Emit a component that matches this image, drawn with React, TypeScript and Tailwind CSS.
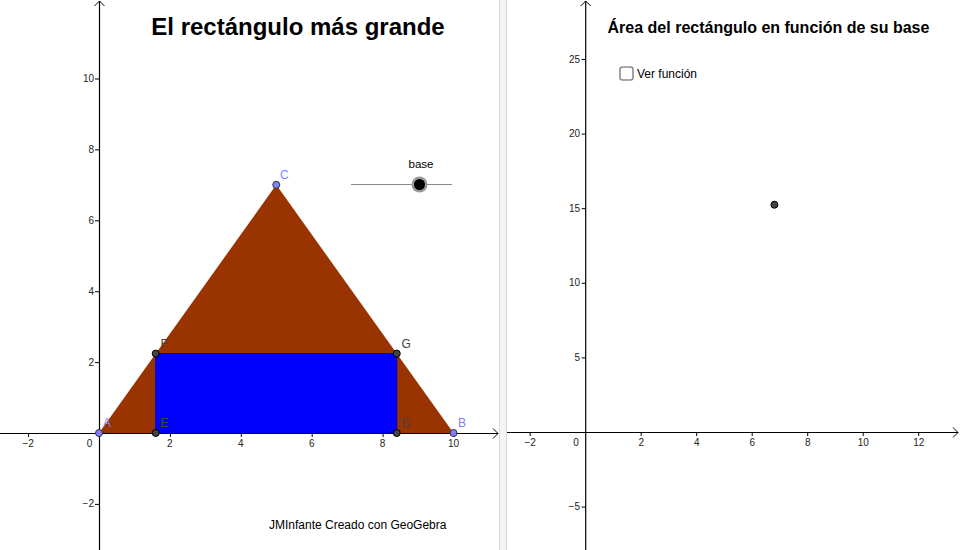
const FONT = '"Liberation Sans", Arial, sans-serif'

type Pt = { x: number; y: number }

function Point({ p, fill, stroke = '#000' }: { p: Pt; fill: string; stroke?: string }) {
  return <circle cx={p.x} cy={p.y} r={3.5} fill={fill} stroke={stroke} strokeWidth={1} />
}

function LeftView() {
  const ox = 99
  const oy = 433
  const s = 35.45
  const fx = (v: number) => ox + v * s
  const fy = (v: number) => oy - v * s

  const A = { x: fx(0), y: fy(0) }
  const B = { x: fx(10), y: fy(0) }
  const C = { x: fx(5), y: fy(7) }
  const E = { x: fx(1.6), y: fy(0) }
  const D = { x: fx(8.4), y: fy(0) }
  const F = { x: fx(1.6), y: fy(2.24) }
  const G = { x: fx(8.4), y: fy(2.24) }

  const xs = [-2, 2, 4, 6, 8, 10]
  const ys = [-2, 2, 4, 6, 8, 10]

  return (
    <svg width={499} height={550} className="block shrink-0" style={{ fontFamily: FONT }}>
      <rect width={499} height={550} fill="#fff" />

      {/* axes */}
      <line x1={0} y1={oy + 0.5} x2={498} y2={oy + 0.5} stroke="#000" strokeWidth={1.2} />
      <polyline points={`493,${oy - 4.5} 498,${oy + 0.5} 493,${oy + 5.5}`} fill="none" stroke="#000" strokeWidth={1} />
      <line x1={ox + 0.5} y1={550} x2={ox + 0.5} y2={1} stroke="#000" strokeWidth={1.2} />
      <polyline points={`${ox - 4.5},6 ${ox + 0.5},1 ${ox + 5.5},6`} fill="none" stroke="#000" strokeWidth={1} />

      {xs.map((v) => (
        <g key={'x' + v}>
          <line x1={fx(v) + 0.5} y1={oy} x2={fx(v) + 0.5} y2={oy + 4} stroke="#000" />
          <text x={fx(v)} y={447} fontSize={10} textAnchor="middle" fill="#222">
            {v < 0 ? '\u2212' + -v : v}
          </text>
        </g>
      ))}
      <text x={89.5} y={447} fontSize={10} textAnchor="middle" fill="#222">0</text>
      {ys.map((v) => (
        <g key={'y' + v}>
          <line x1={ox - 4} y1={fy(v) + 0.5} x2={ox} y2={fy(v) + 0.5} stroke="#000" />
          <text x={94} y={fy(v) + 3.5} fontSize={10} textAnchor="end" fill="#222">
            {v < 0 ? '\u2212' + -v : v}
          </text>
        </g>
      ))}

      {/* triangle and rectangle */}
      <polygon points={`${A.x},${A.y} ${B.x},${B.y} ${C.x},${C.y}`} fill="#993300" />
      <polygon
        points={`${E.x},${E.y} ${D.x},${D.y} ${G.x},${G.y} ${F.x},${F.y}`}
        fill="#0000ff"
        stroke="#0000cc"
        strokeWidth={1}
      />

      {/* points */}
      <Point p={A} fill="#7f7fff" stroke="#333" />
      <Point p={B} fill="#7f7fff" stroke="#333" />
      <Point p={C} fill="#7f7fff" stroke="#333" />
      <Point p={E} fill="#444" />
      <Point p={D} fill="#444" />
      <Point p={F} fill="#444" />
      <Point p={G} fill="#444" />

      <g fontSize={12}>
        <text x={103} y={427} fill="#7f7fff">A</text>
        <text x={458} y={427} fill="#7f7fff">B</text>
        <text x={280} y={179} fill="#7f7fff">C</text>
        <text x={160.5} y={427} fill="#444">E</text>
        <text x={401.5} y={427} fill="#444">D</text>
        <text x={160.5} y={348} fill="#444">F</text>
        <text x={401.5} y={348} fill="#444">G</text>
      </g>

      {/* slider */}
      <text x={421} y={168} fontSize={11.5} textAnchor="middle" fill="#000">base</text>
      <line x1={351} y1={184.5} x2={452} y2={184.5} stroke="#8a8a8a" strokeWidth={1} />
      <circle cx={419.5} cy={184.5} r={8} fill="#9a9a9a" />
      <circle cx={419.5} cy={184.5} r={5.5} fill="#000" />

      {/* texts */}
      <text x={298} y={35} fontSize={24} fontWeight="bold" textAnchor="middle" fill="#000">
        El rectángulo más grande
      </text>
      <text x={269} y={529} fontSize={12} fill="#000">
        JMInfante Creado con GeoGebra
      </text>
    </svg>
  )
}

function RightView() {
  const ox = 78.7
  const oy = 432
  const sx = 27.75
  const sy = 14.92
  const fx = (v: number) => ox + v * sx
  const fy = (v: number) => oy - v * sy

  const xs = [-2, 2, 4, 6, 8, 10, 12]
  const ys = [-5, 5, 10, 15, 20, 25]

  return (
    <svg width={453} height={550} className="block shrink-0" style={{ fontFamily: FONT }}>
      <rect width={453} height={550} fill="#fff" />

      <line x1={0} y1={oy + 0.5} x2={451} y2={oy + 0.5} stroke="#000" strokeWidth={1.2} />
      <polyline points={`446,${oy - 4.5} 451,${oy + 0.5} 446,${oy + 5.5}`} fill="none" stroke="#000" strokeWidth={1} />
      <line x1={ox} y1={550} x2={ox} y2={1} stroke="#000" strokeWidth={1.2} />
      <polyline points={`${ox - 5},6 ${ox},1 ${ox + 5},6`} fill="none" stroke="#000" strokeWidth={1} />

      {xs.map((v) => (
        <g key={'x' + v}>
          <line x1={fx(v)} y1={oy} x2={fx(v)} y2={oy + 4} stroke="#000" />
          <text x={fx(v)} y={446} fontSize={10} textAnchor="middle" fill="#222">
            {v < 0 ? '\u2212' + -v : v}
          </text>
        </g>
      ))}
      <text x={69} y={446} fontSize={10} textAnchor="middle" fill="#222">0</text>
      {ys.map((v) => (
        <g key={'y' + v}>
          <line x1={ox - 4} y1={fy(v) + 0.5} x2={ox} y2={fy(v) + 0.5} stroke="#000" />
          <text x={73} y={fy(v) + 3.5} fontSize={10} textAnchor="end" fill="#222">
            {v < 0 ? '\u2212' + -v : v}
          </text>
        </g>
      ))}

      <circle cx={fx(6.8)} cy={fy(6.8 * 2.24)} r={3.5} fill="#444" stroke="#000" strokeWidth={1} />

      <text x={261.5} y={33} fontSize={16} fontWeight="bold" textAnchor="middle" fill="#000">
        Área del rectángulo en función de su base
      </text>

      <rect x={113} y={67} width={13} height={13} rx={2.5} fill="#fff" stroke="#8c8c8c" strokeWidth={1.6} />
      <text x={130} y={78} fontSize={12} fill="#000">Ver función</text>
    </svg>
  )
}

export default function App() {
  return (
    <div className="flex h-[550px] w-[960px] overflow-hidden bg-white">
      <LeftView />
      <div className="h-full w-[8px] shrink-0 border-x border-[#d9d9d9] bg-[#f4f4f4]" />
      <RightView />
    </div>
  )
}
